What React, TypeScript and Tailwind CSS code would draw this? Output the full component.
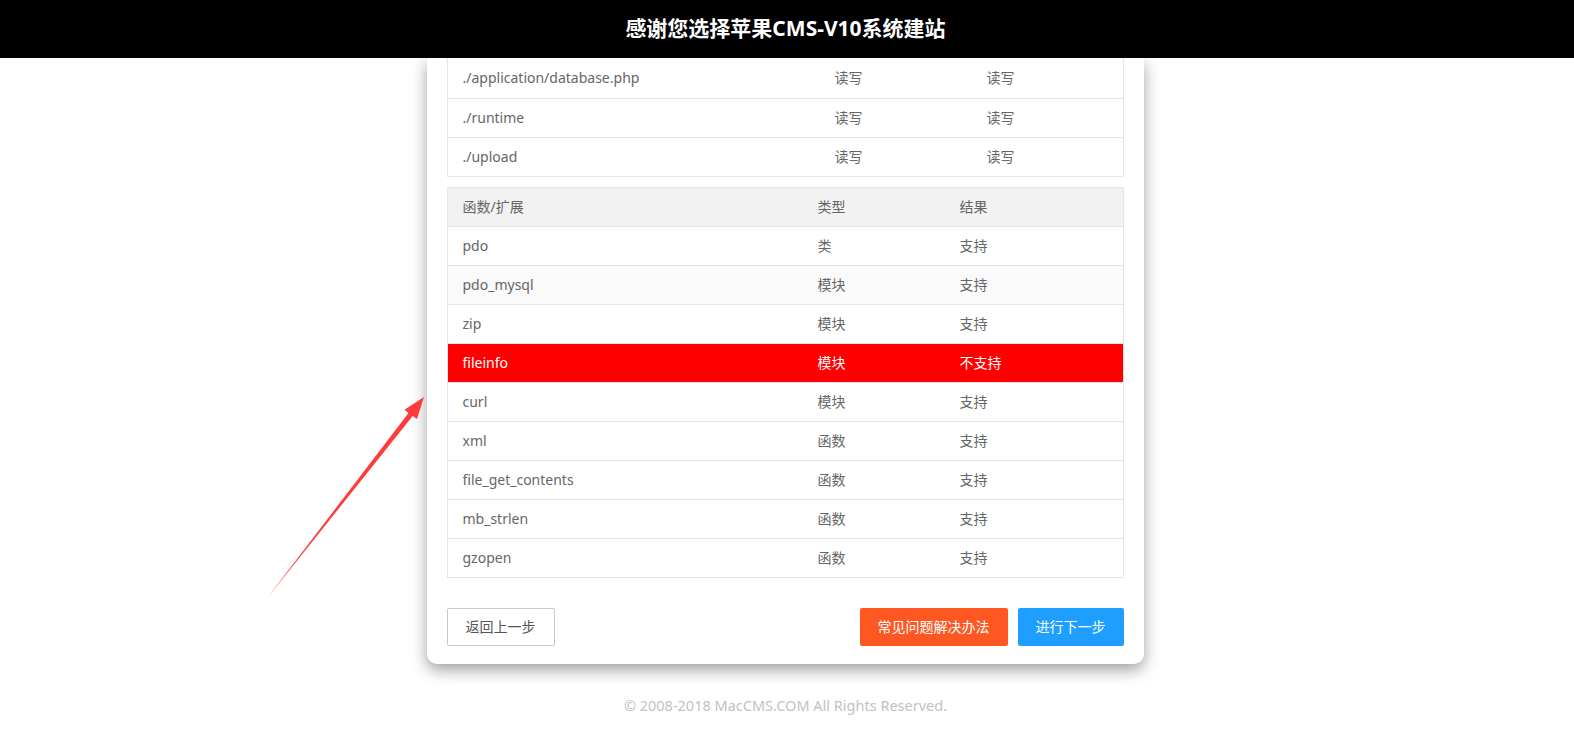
import React from "react";

const dirRows = [
  { path: "./application/database.php", need: "读写", now: "读写" },
  { path: "./runtime", need: "读写", now: "读写" },
  { path: "./upload", need: "读写", now: "读写" },
];

const extRows = [
  { name: "pdo", type: "类", ok: true },
  { name: "pdo_mysql", type: "模块", ok: true, hover: true },
  { name: "zip", type: "模块", ok: true },
  { name: "fileinfo", type: "模块", ok: false },
  { name: "curl", type: "模块", ok: true },
  { name: "xml", type: "函数", ok: true },
  { name: "file_get_contents", type: "函数", ok: true },
  { name: "mb_strlen", type: "函数", ok: true },
  { name: "gzopen", type: "函数", ok: true },
];

function Arrow() {
  return (
    <svg
      className="absolute left-0 top-0 pointer-events-none"
      width="1574"
      height="737"
      viewBox="0 0 1574 737"
    >
      <polygon
        points="268,597 408.5,412.9 404.5,409.8 424,397 417,418.9 412.7,416.1"
        fill="#ff3b3b"
      />
    </svg>
  );
}

export default function App() {
  return (
    <div
      className="relative min-h-screen bg-white text-[14px] text-[#666]"
      style={{ fontFamily: '"Noto Sans", "Noto Sans CJK SC", sans-serif' }}
    >
      <header className="relative z-10 h-[58px] bg-black flex items-center justify-center pr-[3px]">
        <h1 className="text-white text-[21px] font-bold">感谢您选择苹果CMS-V10系统建站</h1>
      </header>

      <div className="w-[717px] mx-auto relative -left-[2px] bg-white rounded-b-[10px] shadow-[0_6px_16px_rgba(0,0,0,0.38)] px-5 pb-[18px]">
        {/* 目录权限 */}
        <div className="border-x border-b border-[#e6e6e6]">
          {dirRows.map((r, i) => (
            <div
              key={r.path}
              className={
                "grid grid-cols-[371px_152px_1fr] items-center pb-[2px] " +
                (i === 0 ? "h-[40px]" : "h-[39px] border-t border-[#e6e6e6]")
              }
            >
              <div className="pl-[15px]">{r.path}</div>
              <div className="pl-[16px]">{r.need}</div>
              <div className="pl-[16px]">{r.now}</div>
            </div>
          ))}
        </div>

        {/* 函数/扩展 */}
        <div className="mt-[10px] border border-[#e6e6e6]">
          <div className="grid grid-cols-[354px_142px_1fr] items-center h-[38px] pb-[2px] bg-[#f2f2f2]">
            <div className="pl-[15px]">函数/扩展</div>
            <div className="pl-[16px]">类型</div>
            <div className="pl-[16px]">结果</div>
          </div>
          {extRows.map((r) => (
            <div
              key={r.name}
              className={
                "grid grid-cols-[354px_142px_1fr] items-center h-[39px] pb-[2px] border-t border-[#e6e6e6] " +
                (!r.ok ? "bg-[#ff0000] text-white" : r.hover ? "bg-[#fafafa]" : "bg-white")
              }
            >
              <div className="pl-[15px]">{r.name}</div>
              <div className="pl-[16px]">{r.type}</div>
              <div className="pl-[16px]">{r.ok ? "支持" : "不支持"}</div>
            </div>
          ))}
        </div>

        <div className="mt-[30px] flex items-center justify-between">
          <button className="h-[38px] px-[18px] pb-[1px] border border-[#c9c9c9] bg-white text-[#555] rounded-[2px]">
            返回上一步
          </button>
          <div className="flex gap-[10px]">
            <button className="h-[38px] px-[18px] pb-[1px] bg-[#ff5722] text-white rounded-[2px]">常见问题解决办法</button>
            <button className="h-[38px] px-[18px] pb-[1px] bg-[#1e9fff] text-white rounded-[2px]">进行下一步</button>
          </div>
        </div>
      </div>

      <p className="mt-[31px] text-center text-[14.5px] text-[#c2c2c2] pr-[3px]">
        © 2008-2018 MacCMS.COM All Rights Reserved.
      </p>

      <Arrow />
    </div>
  );
}
